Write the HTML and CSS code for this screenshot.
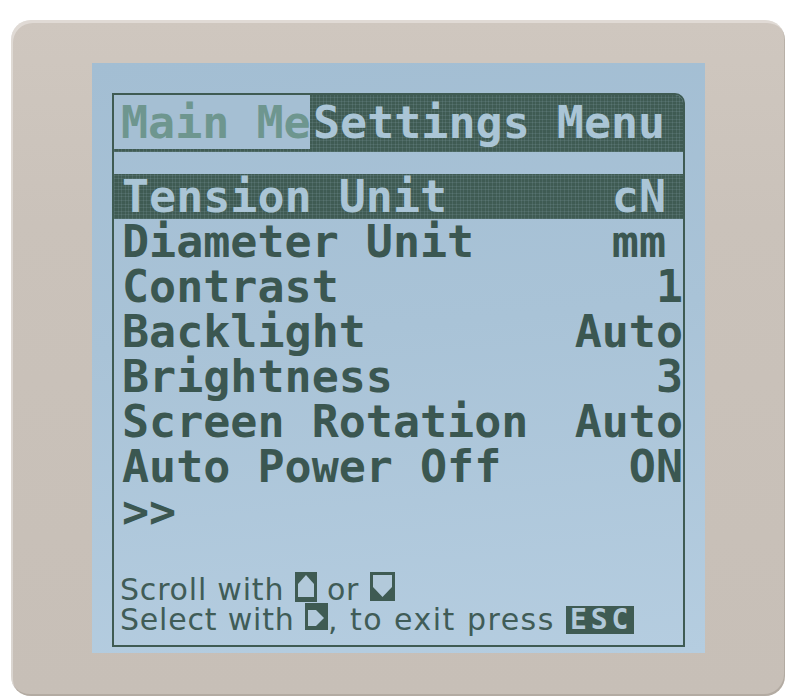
FILE: index.html
```html
<!DOCTYPE html>
<html lang="en">
<head>
<meta charset="utf-8">
<title>Settings Menu</title>
<link rel="stylesheet" href="styles.css">
</head>
<body>
<div class="bezel">
  <div class="lcd">
    <div class="frame">
      <div class="header">
        <div class="prev"><span class="prev-text">Main Menu</span></div>
        <div class="title">Settings Menu</div>
      </div>
      <div class="stripe"></div>
      <ul class="menu">
        <li class="row sel"><span>Tension Unit</span><span class="val pad">cN</span></li>
        <li class="row"><span>Diameter Unit</span><span class="val pad">mm</span></li>
        <li class="row"><span>Contrast</span><span class="val">1</span></li>
        <li class="row"><span>Backlight</span><span class="val">Auto</span></li>
        <li class="row"><span>Brightness</span><span class="val">3</span></li>
        <li class="row"><span>Screen Rotation</span><span class="val">Auto</span></li>
        <li class="row"><span>Auto Power Off</span><span class="val">ON</span></li>
        <li class="row"><span>&gt;&gt;</span></li>
      </ul>
      <div class="help">
        <div class="line">Scroll with <svg class="key key-up" viewBox="0 0 22 30" width="22" height="30"><rect width="22" height="30" fill="#3f5b53"/><polygon points="11,3 19,12 19,25 3,25 3,12" fill="#b2c9da"/></svg> or <svg class="key key-down" viewBox="0 0 25 29" width="25" height="29"><rect width="25" height="29" fill="#3f5b53"/><polygon points="3,3 22,3 22,15 12.5,25 3,15" fill="#b2c9da"/></svg></div>
        <div class="line">Select with <svg class="key key-right" viewBox="0 0 23 27" width="23" height="27"><rect width="23" height="27" fill="#3f5b53"/><polygon points="3,7 11,7 19,15 11,23 3,23" fill="#b2c9da"/></svg><span class="wide">, to exit press </span><span class="esc">ESC</span></div>
      </div>
    </div>
  </div>
</div>
</body>
</html>
```
FILE: styles.css
```css
* {
  box-sizing: border-box;
  margin: 0;
  padding: 0;
}

html, body {
  width: 800px;
  height: 700px;
  overflow: hidden;
  background: #ffffff;
}

.bezel {
  margin: 20px 15px 0 11px;
  height: 676px;
  background: linear-gradient(#cfc7bf, #cac2ba 30%, #c7bfb7);
  border-radius: 20px;
  box-shadow: inset 2px 3px 0 rgba(255, 255, 255, 0.35), inset -1px -2px 0 rgba(120, 110, 100, 0.25);
  padding: 43px 0 0 81px;
}

.lcd {
  width: 613px;
  height: 590px;
  background: linear-gradient(175deg, #a3bed3 0%, #a9c3d7 45%, #b5cde0 100%);
  padding: 30px 20px 6px 20px;
}

.frame {
  height: 554px;
  border: 2px solid #3f5b53;
  border-top-right-radius: 10px;
  overflow: hidden;
  display: flex;
  flex-direction: column;
  font-family: "DejaVu Sans Mono", "Liberation Mono", monospace;
  font-weight: bold;
  font-size: 45px;
  line-height: 45px;
  color: #3b5751;
}

.header {
  height: 57px;
  flex: none;
  display: flex;
  background-color: #3f5b53;
  background-image:
    repeating-linear-gradient(90deg, rgba(170, 197, 214, 0.12) 0 1px, transparent 1px 3.6px),
    repeating-linear-gradient(0deg, rgba(170, 197, 214, 0.12) 0 1px, transparent 1px 3.6px);
}

.prev {
  width: 196px;
  height: 54px;
  flex: none;
  overflow: hidden;
  background: #a5bfd3;
  padding: 5px 0 0 7px;
  white-space: nowrap;
}

.prev-text {
  color: #6e968f;
}

.title {
  padding: 5px 0 0 3px;
  color: #aac5d6;
  white-space: nowrap;
}

.stripe {
  height: 22px;
  flex: none;
}

.menu {
  list-style: none;
  flex: none;
}

.row {
  height: 45px;
  display: flex;
  justify-content: space-between;
  padding-left: 8px;
  white-space: nowrap;
}

.row.sel {
  background-color: #3f5b53;
  background-image:
    repeating-linear-gradient(90deg, rgba(170, 197, 214, 0.12) 0 1px, transparent 1px 3.6px),
    repeating-linear-gradient(0deg, rgba(170, 197, 214, 0.12) 0 1px, transparent 1px 3.6px);
  color: #aac5d6;
}

.val.pad {
  padding-right: 17px;
}

.help {
  margin-top: auto;
  padding: 0 0 10px 6px;
  font-family: "DejaVu Sans", "Liberation Sans", sans-serif;
  font-weight: normal;
  font-size: 30px;
  line-height: 30px;
  letter-spacing: 0.8px;
  color: #405c57;
}

.line {
  height: 30px;
  white-space: nowrap;
}

.wide {
  letter-spacing: 1.5px;
}

.key {
  display: inline-block;
  margin-top: -4px;
}

.key-up {
  vertical-align: -2px;
}

.key-down {
  vertical-align: -1px;
}

.key-right {
  vertical-align: 0;
}

.esc {
  display: inline-block;
  margin-top: -4px;
  height: 28px;
  padding: 0 2px 0 4px;
  background: #3f5b53;
  color: #b2c9da;
  font-family: "DejaVu Sans Mono", monospace;
  font-weight: bold;
  font-size: 28px;
  line-height: 28px;
  letter-spacing: 4px;
  vertical-align: 1px;
}
```
